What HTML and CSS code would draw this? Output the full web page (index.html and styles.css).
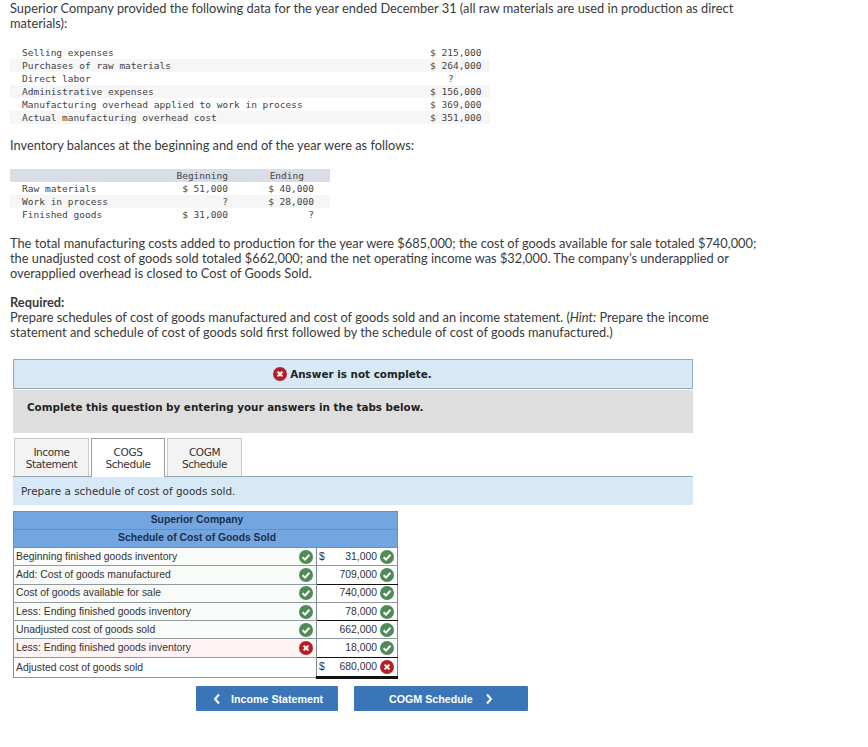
FILE: index.html
```html
<!DOCTYPE html>
<html lang="en">
<head>
<meta charset="utf-8">
<title>Cost of Goods Sold</title>
<link rel="stylesheet" href="styles.css">
</head>
<body>
<svg class="defs" width="0" height="0" aria-hidden="true">
  <symbol id="ok" viewBox="0 0 14 14"><circle cx="7" cy="7" r="7" fill="#4f8a57"/><path d="M3.6 7.2 6 9.6 10.4 4.8" fill="none" stroke="#fff" stroke-width="2"/></symbol>
  <symbol id="bad" viewBox="0 0 14 14"><circle cx="7" cy="7" r="7" fill="#b3202a"/><path d="M4.6 4.6 9.4 9.4M9.4 4.6 4.6 9.4" fill="none" stroke="#fff" stroke-width="2"/></symbol>
</svg>
<main class="page">
  <p class="prose intro">Superior Company provided the following data for the year ended December 31 (all raw materials are used in production as direct materials):</p>

  <table class="data data-costs">
    <tr><td class="lbl">Selling expenses</td><td class="val">$ 215,000</td></tr>
    <tr class="alt"><td class="lbl">Purchases of raw materials</td><td class="val">$ 264,000</td></tr>
    <tr><td class="lbl">Direct labor</td><td class="val q">?</td></tr>
    <tr class="alt"><td class="lbl">Administrative expenses</td><td class="val">$ 156,000</td></tr>
    <tr><td class="lbl">Manufacturing overhead applied to work in process</td><td class="val">$ 369,000</td></tr>
    <tr class="alt"><td class="lbl">Actual manufacturing overhead cost</td><td class="val">$ 351,000</td></tr>
  </table>

  <p class="prose inv">Inventory balances at the beginning and end of the year were as follows:</p>

  <table class="data data-inv">
    <tr class="head"><td class="lbl"></td><td class="c2">Beginning</td><td class="c3 hd">Ending</td></tr>
    <tr><td class="lbl">Raw materials</td><td class="c2">$ 51,000</td><td class="c3">$ 40,000</td></tr>
    <tr class="alt"><td class="lbl">Work in process</td><td class="c2">?</td><td class="c3">$ 28,000</td></tr>
    <tr><td class="lbl">Finished goods</td><td class="c2">$ 31,000</td><td class="c3">?</td></tr>
  </table>

  <p class="prose total">The total manufacturing costs added to production for the year were $685,000; the cost of goods available for sale totaled $740,000; the unadjusted cost of goods sold totaled $662,000; and the net operating income was $32,000. The company’s underapplied or overapplied overhead is closed to Cost of Goods Sold.</p>

  <p class="prose req"><strong>Required:</strong><br>Prepare schedules of cost of goods manufactured and cost of goods sold and an income statement. (<em>Hint:</em> Prepare the income statement and schedule of cost of goods sold first followed by the schedule of cost of goods manufactured.)</p>

  <section class="work">
    <div class="notice"><svg class="ico"><use href="#bad"/></svg><span>Answer is not complete.</span></div>
    <div class="complete">Complete this question by entering your answers in the tabs below.</div>
    <div class="tabs">
      <div class="tab">Income<br>Statement</div>
      <div class="tab active">COGS<br>Schedule</div>
      <div class="tab">COGM<br>Schedule</div>
    </div>
    <div class="instr">Prepare a schedule of cost of goods sold.</div>

    <table class="sched">
      <tr class="sh"><th colspan="3">Superior Company</th></tr>
      <tr class="sh"><th colspan="3">Schedule of Cost of Goods Sold</th></tr>
      <tr><td class="name">Beginning finished goods inventory</td><td class="st"><svg class="ico"><use href="#ok"/></svg></td><td class="amt"><div class="amt-in"><span class="cur">$</span><span class="num">31,000</span><svg class="ico"><use href="#ok"/></svg></div></td></tr>
      <tr><td class="name">Add: Cost of goods manufactured</td><td class="st"><svg class="ico"><use href="#ok"/></svg></td><td class="amt line"><div class="amt-in"><span class="cur"></span><span class="num">709,000</span><svg class="ico"><use href="#ok"/></svg></div></td></tr>
      <tr><td class="name">Cost of goods available for sale</td><td class="st"><svg class="ico"><use href="#ok"/></svg></td><td class="amt"><div class="amt-in"><span class="cur"></span><span class="num">740,000</span><svg class="ico"><use href="#ok"/></svg></div></td></tr>
      <tr><td class="name">Less: Ending finished goods inventory</td><td class="st"><svg class="ico"><use href="#ok"/></svg></td><td class="amt line"><div class="amt-in"><span class="cur"></span><span class="num">78,000</span><svg class="ico"><use href="#ok"/></svg></div></td></tr>
      <tr><td class="name">Unadjusted cost of goods sold</td><td class="st"><svg class="ico"><use href="#ok"/></svg></td><td class="amt"><div class="amt-in"><span class="cur"></span><span class="num">662,000</span><svg class="ico"><use href="#ok"/></svg></div></td></tr>
      <tr class="wrong"><td class="name">Less: Ending finished goods inventory</td><td class="st"><svg class="ico"><use href="#bad"/></svg></td><td class="amt line"><div class="amt-in"><span class="cur"></span><span class="num">18,000</span><svg class="ico"><use href="#ok"/></svg></div></td></tr>
      <tr class="last"><td class="name">Adjusted cost of goods sold</td><td class="st"></td><td class="amt dbl"><div class="amt-in"><span class="cur">$</span><span class="num">680,000</span><svg class="ico"><use href="#bad"/></svg></div></td></tr>
    </table>

    <div class="nav">
      <a class="btn btn-prev"><svg class="chev" viewBox="0 0 8 12"><path d="M6 1.500 2 6l4 4.500" fill="none" stroke="#fff" stroke-width="2"/></svg><span>Income Statement</span></a>
      <a class="btn btn-next"><span>COGM Schedule</span><svg class="chev" viewBox="0 0 8 12"><path d="M2 1.500 6 6l-4 4.500" fill="none" stroke="#fff" stroke-width="2"/></svg></a>
    </div>
  </section>
</main>
</body>
</html>
```
FILE: styles.css
```css
* { box-sizing: border-box; }
html, body { margin: 0; padding: 0; background: #fff; }
.defs { position: absolute; }
.page { width: 868px; height: 747px; overflow: hidden; padding: 0 0 0 10px; }
.prose { margin: 0; font: 12.82px/15px Lato, "Open Sans", sans-serif; color: #3a3a3a; width: 752px; }
.intro { padding-top: 1px; }
.data { border-collapse: collapse; font: 9.52px/13px "DejaVu Sans Mono", monospace; color: #444; }
.data td { padding: 0; height: 13px; white-space: nowrap; }
.data .alt td { background: #f6f6f6; }
.data .lbl { padding-left: 12px; }
.data-costs { width: 480px; margin-top: 15px; }
.data-costs .val { width: 60px; text-align: left; }
.data-costs .q { padding-left: 18px; }
.inv { margin-top: 14px; }
.data-inv { width: 320px; margin-top: 16px; table-layout: fixed; }
.data-inv .lbl { width: 155px; }
.data-inv .c2 { width: 78px; text-align: right; padding-right: 15px; }
.data-inv .c3 { text-align: right; padding-right: 16px; }
.data-inv .hd { padding-right: 26px; }
.data-inv .head td { background: #d9dde8; }
.total { margin-top: 15px; }
.req { margin-top: 14px; }
.req strong { font-weight: 700; }
.work { margin: 19px 0 0 3px; width: 680px; }
.ico { width: 14px; height: 14px; flex: none; display: block; }
.notice { height: 30px; background: #d7e9f7; border: 1px solid #8fa9bd; display: flex; align-items: center; justify-content: center; gap: 3px; padding-right: 1px; font: 700 10.4px "DejaVu Sans", Verdana, sans-serif; color: #222; }
.complete { height: 43px; margin-top: 1px; background: #dedede; padding: 11px 14px 0; font: 700 10.35px/13px "DejaVu Sans", Verdana, sans-serif; color: #222; }
.tabs { display: flex; gap: 2px; margin-top: 5px; padding-left: 1px; height: 39px; border-bottom: 1px solid #8fa3ad; }
.tab { width: 75px; height: 38px; padding-top: 7px; text-align: center; font: 10.5px/12px "DejaVu Sans", Verdana, sans-serif; letter-spacing: -0.4px; color: #333; background: #f3f3f3; border: 1px solid #c9c9c9; border-bottom: 0; }
.tab.active { width: 74px; background: #fff; border-color: #9c9c9c; height: 39px; position: relative; }
.instr { height: 28px; background: #d7e9f7; padding: 8px 8px 0; font: 10.45px/13px "DejaVu Sans", Verdana, sans-serif; color: #333; }
.sched { margin-top: 6px; width: 385px; border-collapse: collapse; font: 10.4px/12px "Liberation Sans", Arial, sans-serif; color: #333; border: 1px solid #7f8c96; }
.sh th { height: 18px; padding: 0 17px 2px 0; background: #73a6e0; color: #1a2f4a; font: 700 10.35px/12px "Liberation Sans", Arial, sans-serif; text-align: center; border-bottom: 1px solid #7f8c96; }
.sched td { height: 18.3px; padding: 0; background: #f9fbf9; border-bottom: 1px solid #8f9a9f; }
.sched .name { padding-left: 2px; width: 280px; }
.sched .st { width: 23px; padding-right: 3px; }
.sched .st .ico { margin-left: auto; margin-right: 0; }
.sched .amt { background: #fff; border-left: 1px solid #7f8c96; padding: 0 3px 0 2px; }
.sched .amt.line { border-bottom: 1px solid #111; }
.amt-in { display: flex; align-items: center; gap: 3px; }
.cur { width: 12px; }
.num { flex: 1; text-align: right; }
.sched .wrong td { height: 19px; background: #fff3f3; }
.sched .wrong .amt { background: #fff; }
.sched .last td { height: 20px; background: #fff; }
.sched .dbl { border-bottom: 3px solid #111; }
.nav { display: flex; gap: 16px; margin: 7px 0 0 183px; }
.btn { height: 25px; display: flex; align-items: center; background: #3a75b8; color: #fff; border-radius: 1px; font: 700 10.7px "Liberation Sans", Arial, sans-serif; }
.btn-prev { width: 142px; padding-left: 17px; gap: 10px; }
.btn-next { width: 174px; padding-left: 35px; gap: 12px; }
.chev { width: 8px; height: 12px; display: block; }
```
